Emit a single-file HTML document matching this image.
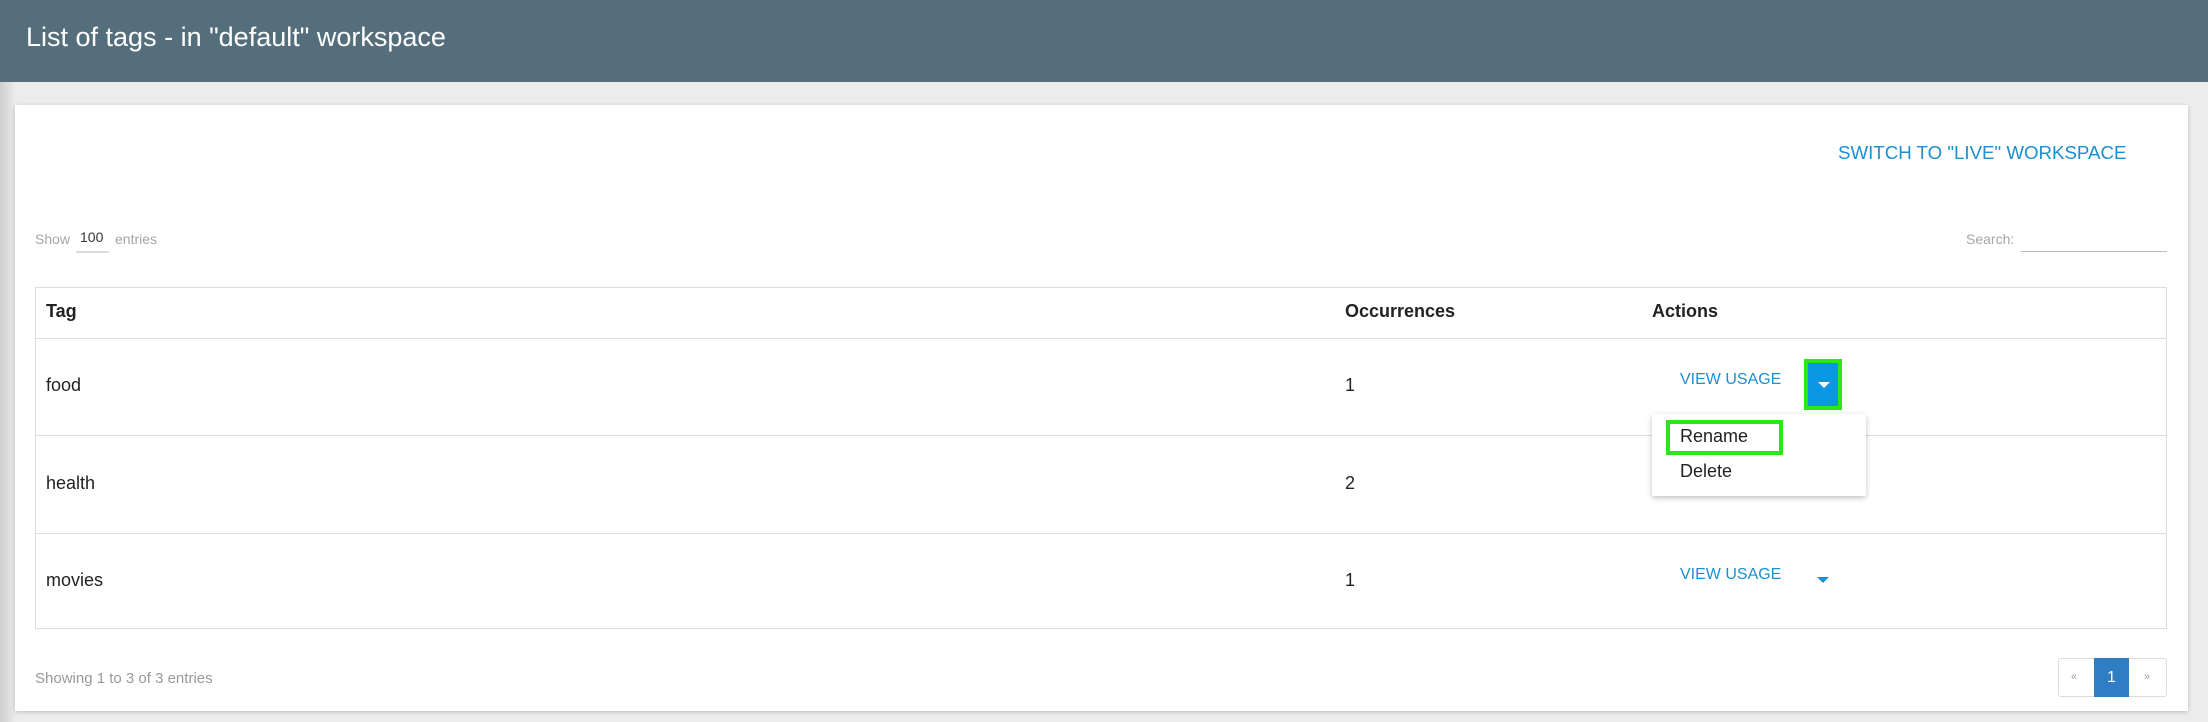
<!DOCTYPE html>
<html><head><meta charset="utf-8"><style>
*{margin:0;padding:0;box-sizing:border-box}
body{width:2208px;height:722px;background:#ececec;font-family:"Liberation Sans",sans-serif;position:relative;overflow:hidden}
.hdr{position:absolute;left:0;top:0;width:2208px;height:82px;background:#546f7b}
.hdr h1{position:absolute;left:26px;top:22px;font-size:27px;font-weight:normal;color:#fff}
.lshadow{position:absolute;left:0;top:82px;width:14px;height:640px;background:linear-gradient(90deg,#cfcfcf,#e8e8e8)}
.card{position:absolute;left:15px;top:105px;width:2173px;height:606px;background:#fff;box-shadow:0 1px 4px rgba(0,0,0,.2)}
.abs{position:absolute;white-space:nowrap}
.blue{color:#1a8fd1}
.gray{color:#a5a5a5}
.line{position:absolute;background:#dcdcdc}
</style></head><body>
<div class="hdr"><h1>List of tags - in "default" workspace</h1></div>
<div class="lshadow"></div>
<div class="card"></div>
<div class="abs blue" style="left:1838px;top:142px;font-size:18.7px">SWITCH TO "LIVE" WORKSPACE</div>
<div class="abs gray" style="left:35px;top:231px;font-size:14px">Show</div>
<div class="abs" style="left:80px;top:229px;font-size:14px;color:#333">100</div>
<div class="line" style="left:76px;top:251px;width:33px;height:2px"></div>
<div class="abs gray" style="top:231px;font-size:14px;left:115px">entries</div>
<div class="abs gray" style="left:1966px;top:231px;font-size:14px">Search:</div>
<div class="line" style="left:2021px;top:251px;width:146px;height:1px;background:#bbb"></div>
<div style="position:absolute;left:35px;top:287px;width:2132px;height:342px;border:1px solid #dcdcdc"></div>
<div class="line" style="left:35px;top:338px;width:2132px;height:1px"></div>
<div class="line" style="left:35px;top:435px;width:2132px;height:1px"></div>
<div class="line" style="left:35px;top:533px;width:2132px;height:1px"></div>
<div class="abs" style="left:46px;top:301px;font-size:18px;font-weight:bold;color:#222">Tag</div>
<div class="abs" style="left:1345px;top:301px;font-size:18px;font-weight:bold;color:#222">Occurrences</div>
<div class="abs" style="left:1652px;top:301px;font-size:18px;font-weight:bold;color:#222">Actions</div>
<div class="abs" style="left:46px;top:375px;font-size:18px;color:#222">food</div>
<div class="abs" style="left:1345px;top:375px;font-size:18px;color:#222">1</div>
<div class="abs" style="left:46px;top:473px;font-size:18px;color:#222">health</div>
<div class="abs" style="left:1345px;top:473px;font-size:18px;color:#222">2</div>
<div class="abs" style="left:46px;top:570px;font-size:18px;color:#222">movies</div>
<div class="abs" style="left:1345px;top:570px;font-size:18px;color:#222">1</div>
<div class="abs blue" style="left:1680px;top:371px;font-size:16px">VIEW USAGE</div>
<div class="abs blue" style="left:1680px;top:566px;font-size:16px">VIEW USAGE</div>
<div style="position:absolute;left:1804px;top:359px;width:38px;height:51px;background:#0b96e4;border:4px solid #2de51c"></div>
<div style="position:absolute;left:1818px;top:382px;width:0;height:0;border-left:6px solid transparent;border-right:6px solid transparent;border-top:6px solid #fff"></div>
<div style="position:absolute;left:1817px;top:577px;width:0;height:0;border-left:6px solid transparent;border-right:6px solid transparent;border-top:6px solid #1a8fd1"></div>
<div style="position:absolute;left:1652px;top:414px;width:214px;height:82px;background:#fff;box-shadow:0 2px 6px rgba(0,0,0,.25);border-radius:2px"></div>
<div style="position:absolute;left:1666px;top:420px;width:117px;height:35px;border:4px solid #2de51c"></div>
<div class="abs" style="left:1680px;top:426px;font-size:18px;color:#222">Rename</div>
<div class="abs" style="left:1680px;top:461px;font-size:18px;color:#222">Delete</div>
<div class="abs gray" style="left:35px;top:670px;font-size:15px;color:#999">Showing 1 to 3 of 3 entries</div>
<div style="position:absolute;left:2058px;top:658px;width:109px;height:39px;border:1px solid #ddd;border-radius:3px"></div>
<div class="abs" style="left:2071px;top:671px;font-size:11px;color:#999">«</div>
<div style="position:absolute;left:2094px;top:658px;width:35px;height:39px;background:#2f7ec4;color:#fff;font-size:16px;text-align:center;line-height:39px">1</div>
<div class="abs" style="left:2144px;top:671px;font-size:11px;color:#999">»</div>
</body></html>
